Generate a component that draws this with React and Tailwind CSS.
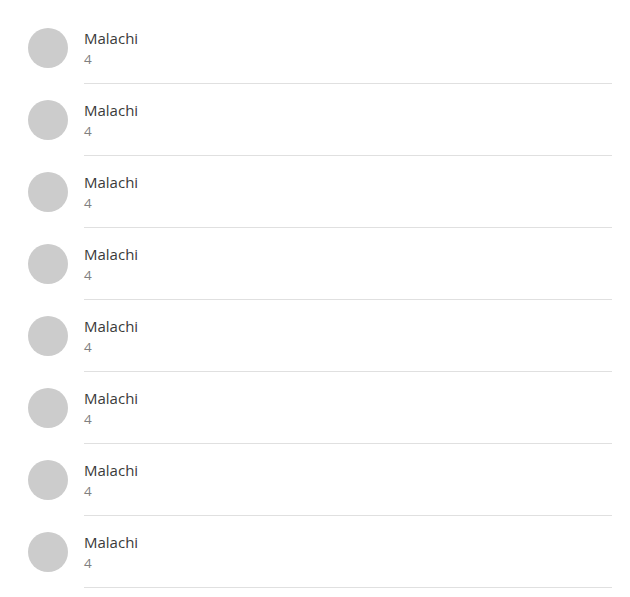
import React from 'react'

const items = Array.from({ length: 8 }, () => ({ name: 'Malachi', count: 4 }))

function App() {
    return (
        <div className="bg-white min-h-screen pt-3 pr-[18px]" style={{ fontFamily: '"Open Sans", "Noto Sans", sans-serif' }}>
            <ul>
                {items.map((item, i) => (
                    <li key={i} className="flex items-stretch">
                        <div className="pl-7 pr-4 flex items-center h-[72px] pb-px">
                            <div className="w-10 h-10 rounded-full bg-[#cccccc]"></div>
                        </div>
                        <div className="flex-1 border-b border-[#e0e0e0] pt-[16px]">
                            <div className="text-[15px] leading-5 text-[#3a3a3a]">{item.name}</div>
                            <div className="mt-[2px] text-[13.5px] leading-[18px] text-[#808080]">{item.count}</div>
                        </div>
                    </li>
                ))}
            </ul>
        </div>
    )
}

export default App
